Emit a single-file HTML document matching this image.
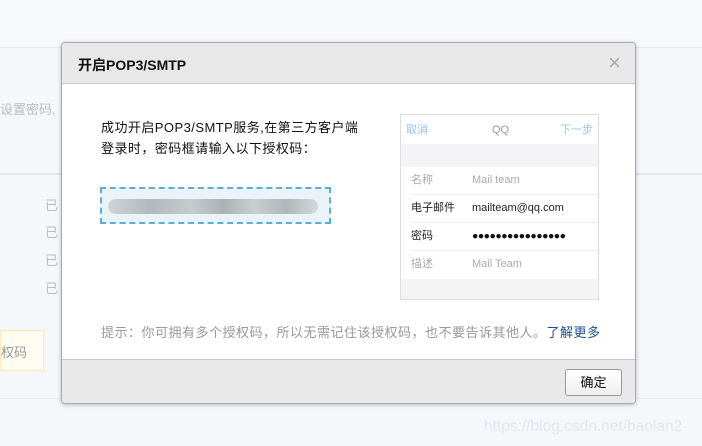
<!DOCTYPE html>
<html><head><meta charset="utf-8"><style>
*{margin:0;padding:0;box-sizing:border-box}
body{width:702px;height:446px;overflow:hidden;background:#f5f8fb;font-family:"Liberation Sans","Noto Sans CJK SC",sans-serif;position:relative}
.a{position:absolute}
.g{color:#bbb;font-size:13px}
.r{height:28px;border-bottom:1px solid #eee;margin-left:10px;position:relative;line-height:27px;font-size:11px}
.r span{position:absolute;top:0}
</style></head><body>
<div class="a" style="left:0;top:0;width:702px;height:48px;background:#f7f9fc;border-bottom:1px solid #e3e9f0"></div>
<div class="a" style="left:0;top:173px;width:702px;height:2px;background:#dbe6f1"></div>
<div class="a" style="left:0;top:398px;width:702px;height:1px;background:#e6ecf2"></div>
<div class="a g" style="left:0;top:99px">设置密码,</div>
<div class="a g" style="left:45px;top:195px">已</div>
<div class="a g" style="left:45px;top:222px">已</div>
<div class="a g" style="left:45px;top:250px">已</div>
<div class="a g" style="left:45px;top:278px">已</div>
<div class="a" style="left:0;top:330px;width:44px;height:41px;background:#fffdf1;border:1px solid #fbe9b8;color:#999;font-size:13px;padding:11px 0 0 0">权码</div>
<div class="a" style="left:484px;top:418px;color:#e2e6ea;font-size:15.5px">https://blog.csdn.net/baolan2</div>

<div class="a" style="left:61px;top:42px;width:575px;height:362px;background:#fff;border:1px solid #aaa;border-radius:4px;box-shadow:0 1px 4px rgba(0,0,0,.25);overflow:hidden">
 <div style="height:41px;background:#e8e8e8;border-bottom:1px solid #c8c8c8;font-weight:bold;font-size:14px;padding:12px 0 0 16px;color:#111">开启POP3/SMTP</div>
 <div class="a" style="right:14px;top:7px;font-size:22px;color:#aaa">×</div>
 <div class="a" style="left:39px;top:74px;font-size:13px;line-height:21px;color:#111;letter-spacing:0.45px">成功开启POP3/SMTP服务,在第三方客户端<br>登录时，密码框请输入以下授权码：</div>
 <div class="a" style="left:38px;top:144px;width:231px;height:37px;border:2px dashed #5aaed8;background:#e9f3f9">
  <div style="margin:10px 0 0 6px;width:210px;height:15px;border-radius:8px;background:linear-gradient(90deg,#cfd4d8 0,#b3b8bc 20%,#c6cbce 40%,#adb2b5 55%,#c9ced1 70%,#b1b6b9 85%,#d5d9dc 100%)"></div>
 </div>
 <div class="a" style="left:338px;top:71px;width:199px;height:186px;border:1px solid #ddd;background:#f4f4f6;font-size:11px">
  <div style="height:29px;background:#fff;position:relative;line-height:29px">
   <span class="a" style="left:5px;top:1px;color:#9cc4ea">取消</span>
   <span class="a" style="left:91px;top:1px;color:#999">QQ</span>
   <span class="a" style="right:5px;top:1px;color:#9cc4ea">下一步</span>
  </div>
  <div style="position:absolute;top:52px;left:0;width:197px;background:#fff">
   <div class="r"><span style="color:#aaa">名称</span><span style="left:61px;color:#aaa">Mail team</span></div>
   <div class="r"><span style="color:#222">电子邮件</span><span style="left:61px;color:#222">mailteam@qq.com</span></div>
   <div class="r"><span style="color:#222">密码</span><span style="left:61px;color:#111;font-size:10.5px;letter-spacing:-0.5px">●●●●●●●●●●●●●●●●</span></div>
   <div class="r" style="border:0"><span style="color:#aaa">描述</span><span style="left:61px;color:#aaa">Mail Team</span></div>
  </div>
 </div>
 <div class="a" style="left:39px;top:279px;font-size:13px;color:#999;letter-spacing:0.5px">提示：你可拥有多个授权码，所以无需记住该授权码，也不要告诉其他人。<span style="color:#1d4f91">了解更多</span></div>
 <div class="a" style="left:0;top:316px;width:575px;height:46px;background:#e8e8e8;border-top:1px solid #c8c8c8">
  <div class="a" style="left:503px;top:9px;width:57px;height:27px;border:1px solid #999;border-radius:3px;background:linear-gradient(#fff,#eee);font-size:13px;text-align:center;line-height:25px;color:#111">确定</div>
 </div>
</div>
</body></html>
